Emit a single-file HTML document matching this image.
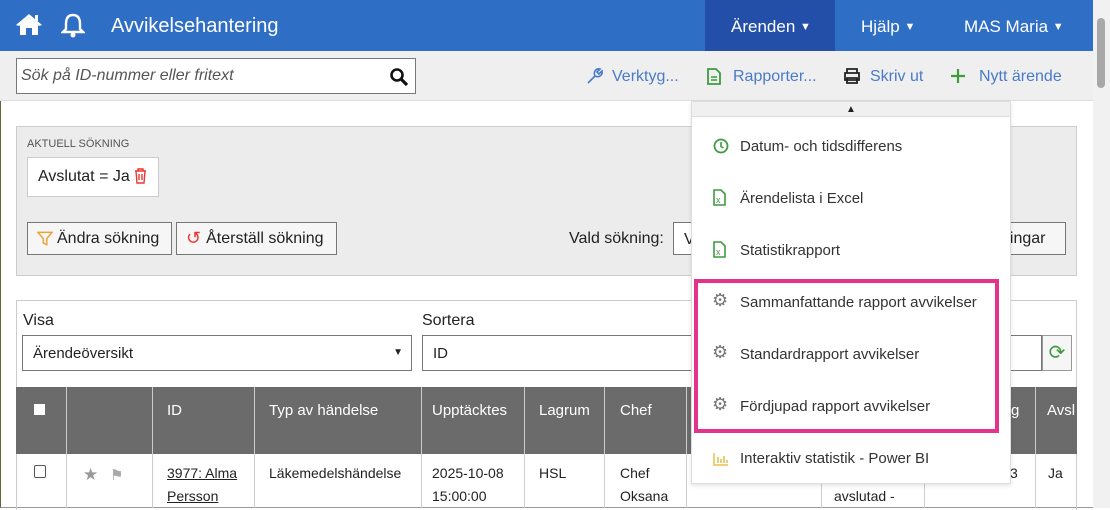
<!DOCTYPE html>
<html><head><meta charset="utf-8"><style>
*{box-sizing:border-box;margin:0;padding:0}
body{width:1110px;height:508px;overflow:hidden;background:#fff;font-family:"Liberation Sans",Arial,sans-serif;position:relative;font-size:15px;color:#222}
.a{position:absolute}
.hdr{left:0;top:0;width:1093px;height:51px;background:#2f6ec5;color:#fff}
.tb{left:0;top:51px;width:1093px;height:50px;background:#efefef;border-bottom:1px solid #ddd}
.btn{background:#f6f6f6;border:1px solid #777;height:33px;font-size:16px;display:flex;align-items:center;padding-left:9px;white-space:nowrap}
.dd{left:691px;top:101px;width:320px;height:383px;background:#fff;border:1px solid #ddd;box-shadow:0 2px 4px rgba(0,0,0,.1)}
.it{position:absolute;left:48px;font-size:15px;color:#333}
.ic{position:absolute;left:21px}
</style></head><body>
<div class="a" style="left:0;top:0;width:1110px;height:508px;border:1px solid #999;border-left:1px solid #5a6a3a"></div>
<div class="a hdr">
 <svg class="a" style="left:15px;top:12px" width="28" height="24" viewBox="0 0 28 24"><path d="M14 2 L1 13 L4 14 L14 5 L24 14 L27 13 Z" fill="#fff"/><path d="M5 13 V23 H11 V16 H17 V23 H23 V13 L14 5Z" fill="#fff"/><rect x="20" y="3" width="3" height="6" fill="#fff"/></svg>
 <svg class="a" style="left:61px;top:12px" width="24" height="26" viewBox="0 0 24 26"><path d="M12 3 C6 3 5 8 5 12 V17 L2 20 H22 L19 17 V12 C19 8 18 3 12 3Z" fill="none" stroke="#fff" stroke-width="2.4"/><circle cx="12" cy="23" r="2.5" fill="#fff"/></svg>
 <div class="a" style="left:111px;top:15px;font-size:20px">Avvikelsehantering</div>
 <div class="a" style="left:705px;top:0;width:130px;height:51px;background:#234fa8"></div>
 <div class="a" style="left:731px;top:17px;font-size:17px">Ärenden <span style="font-size:11px;vertical-align:2px">▼</span></div>
 <div class="a" style="left:861px;top:17px;font-size:17px">Hjälp <span style="font-size:11px;vertical-align:2px">▼</span></div>
 <div class="a" style="left:964px;top:17px;font-size:17px">MAS Maria <span style="font-size:11px;vertical-align:2px">▼</span></div>
</div>
<div class="a" style="left:1093px;top:0;width:17px;height:508px;background:#f1f1f1"></div>
<div class="a" style="left:1097px;top:18px;width:8px;height:70px;background:#a8a8a8;border-radius:4px"></div>
<div class="a tb">
 <div class="a" style="left:16px;top:7px;width:400px;height:36px;background:#fff;border:1px solid #777"></div>
 <div class="a" style="left:21px;top:16px;font-style:italic;color:#555;font-size:16px">Sök på ID-nummer eller fritext</div>
 <svg class="a" style="left:389px;top:16px" width="20" height="20" viewBox="0 0 20 20"><circle cx="8" cy="8" r="5.5" fill="none" stroke="#111" stroke-width="2.6"/><path d="M12 12 L18 18" stroke="#111" stroke-width="3.2"/></svg>
 <svg class="a" style="left:586px;top:16px" width="18" height="18" viewBox="0 0 18 18"><path d="M2 16 L9 9 M9 9 C7 5 10 1 14 2 L11 5 L13 7 L16 4 C17 8 13 11 9 9" fill="none" stroke="#4a7bc8" stroke-width="1.6"/></svg>
 <div class="a" style="left:612px;top:17px;color:#4a7bc8;font-size:16px">Verktyg...</div>
 <svg class="a" style="left:707px;top:17px" width="14" height="17" viewBox="0 0 14 17"><path d="M1 1H9L13 5V16H1Z" fill="none" stroke="#3e9b3e" stroke-width="1.8"/><path d="M4 9H10M4 12H10" stroke="#3e9b3e" stroke-width="1.5"/></svg>
 <div class="a" style="left:733px;top:17px;color:#4a7bc8;font-size:16px">Rapporter...</div>
 <svg class="a" style="left:843px;top:17px" width="18" height="16" viewBox="0 0 18 16"><path d="M4 5V1H14V5M2 5H16V12H2Z M4 10H14V15H4Z" fill="none" stroke="#222" stroke-width="1.8"/></svg>
 <div class="a" style="left:870px;top:17px;color:#4a7bc8;font-size:16px">Skriv ut</div>
 <svg class="a" style="left:951px;top:18px" width="14" height="14" viewBox="0 0 14 14"><path d="M7 0V14M0 7H14" stroke="#3e9b3e" stroke-width="2.2"/></svg>
 <div class="a" style="left:979px;top:17px;color:#4a7bc8;font-size:16px">Nytt ärende</div>
</div>
<div class="a" style="left:16px;top:126px;width:1061px;height:150px;background:#ececec;border:1px solid #ccc"></div>
<div class="a" style="left:27px;top:138px;font-size:11px;color:#555">AKTUELL SÖKNING</div>
<div class="a" style="left:27px;top:157px;width:132px;height:40px;background:#fff;border:1px solid #ccc;font-size:16px;padding:10px 0 0 10px">Avslutat = Ja</div>
<svg class="a" style="left:134px;top:168px" width="13" height="16" viewBox="0 0 13 16"><path d="M1 3H12M4 3V1H9V3M2 3L3 15H10L11 3M5 6V12M8 6V12" fill="none" stroke="#e33" stroke-width="1.4"/></svg>
<div class="a btn" style="left:27px;top:222px;width:145px"><svg width="16" height="17" viewBox="0 0 18 18" style="margin-right:4px;flex:none"><path d="M1 2H17L11 9V16L7 14V9Z" fill="none" stroke="#f0a030" stroke-width="1.6"/></svg>Ändra sökning</div>
<div class="a btn" style="left:176px;top:222px;width:161px"><span style="color:#e33;margin-right:5px;font-size:18px">↺</span>Återställ sökning</div>
<div class="a" style="left:569px;top:230px;font-size:16px">Vald sökning:</div>
<div class="a" style="left:673px;top:222px;width:30px;height:33px;background:#fff;border:1px solid #777;padding:8px 0 0 10px;font-size:16px">V</div>
<div class="a btn" style="left:1000px;top:222px;width:66px;padding-left:0">ningar</div>
<div class="a" style="left:16px;top:300px;width:1061px;height:210px;border:1px solid #ccc;border-bottom:none"></div>
<div class="a" style="left:23px;top:312px;font-size:16px">Visa</div>
<div class="a" style="left:422px;top:312px;font-size:16px">Sortera</div>
<div class="a" style="left:22px;top:335px;width:390px;height:36px;border:1px solid #777;padding:9px 10px;font-size:15px">Ärendeöversikt<span style="position:absolute;right:8px;font-size:10px;top:11px">▼</span></div>
<div class="a" style="left:422px;top:335px;width:620px;height:36px;border:1px solid #777;padding:9px 10px;font-size:15px">ID</div>
<div class="a" style="left:1042px;top:335px;width:30px;height:36px;border:1px solid #999;background:#f6f6f6;color:#3e9b3e;font-size:20px;text-align:center;padding-top:4px">⟳</div>
<div class="a" style="left:16px;top:387px;width:1061px;height:67px;background:#6b6b6b"></div>
<div class="a" style="left:34px;top:404px;width:11px;height:11px;background:#fff"></div>
<div class="a" style="left:34px;top:465px;width:12px;height:13px;border:1px solid #555;border-radius:2px"></div>
<div class="a" style="left:83px;top:465px;color:#999;font-size:17px">★</div>
<div class="a" style="left:110px;top:466px;color:#aaa;font-size:15px">⚑</div>
<div style="color:#fff;font-size:15px">
<div class="a" style="left:167px;top:402px">ID</div>
<div class="a" style="left:269px;top:402px">Typ av händelse</div>
<div class="a" style="left:432px;top:402px">Upptäcktes</div>
<div class="a" style="left:539px;top:402px">Lagrum</div>
<div class="a" style="left:620px;top:402px">Chef</div>
<div class="a" style="left:1011px;top:402px">g</div>
<div class="a" style="left:1047px;top:402px">Avsl</div>
</div>
<div style="font-size:14px;line-height:23px">
<div class="a" style="left:167px;top:462px;text-decoration:underline">3977: Alma<br>Persson</div>
<div class="a" style="left:269px;top:462px">Läkemedelshändelse</div>
<div class="a" style="left:432px;top:462px">2025-10-08<br>15:00:00</div>
<div class="a" style="left:539px;top:462px">HSL</div>
<div class="a" style="left:620px;top:462px">Chef<br>Oksana</div>
<div class="a" style="left:834px;top:485px">avslutad -</div>
<div class="a" style="left:1010px;top:462px">3</div>
<div class="a" style="left:1048px;top:462px">Ja</div>
</div>
<div class="a" style="left:66px;top:387px;width:1px;height:121px;background:#ccc"></div>
<div class="a" style="left:152px;top:387px;width:1px;height:121px;background:#ccc"></div>
<div class="a" style="left:254px;top:387px;width:1px;height:121px;background:#ccc"></div>
<div class="a" style="left:421px;top:387px;width:1px;height:121px;background:#ccc"></div>
<div class="a" style="left:524px;top:387px;width:1px;height:121px;background:#ccc"></div>
<div class="a" style="left:604px;top:387px;width:1px;height:121px;background:#ccc"></div>
<div class="a" style="left:686px;top:387px;width:1px;height:121px;background:#ccc"></div>
<div class="a" style="left:821px;top:454px;width:1px;height:54px;background:#ccc"></div>
<div class="a" style="left:924px;top:454px;width:1px;height:54px;background:#ccc"></div>
<div class="a" style="left:1035px;top:387px;width:1px;height:121px;background:#ccc"></div>
<div class="a dd">
 <div class="a" style="left:0;top:0;width:318px;height:15px;background:#f0f0f0;border-bottom:1px solid #ddd;text-align:center;font-size:10px;line-height:15px">▲</div>
 <svg class="ic" style="top:36px" width="16" height="16" viewBox="0 0 16 16"><circle cx="8" cy="8" r="6.5" fill="none" stroke="#3e9b3e" stroke-width="1.8"/><path d="M8 4V8.5L10.5 10" stroke="#3e9b3e" stroke-width="1.6" fill="none"/></svg>
 <div class="it" style="top:36px">Datum- och tidsdifferens</div>
 <svg class="ic" style="top:87px" width="13" height="17" viewBox="0 0 13 17"><path d="M1 1H8L12 5V16H1Z" fill="none" stroke="#3e9b3e" stroke-width="1.6"/><text x="3" y="14" font-size="9" fill="#3e9b3e" font-family="Liberation Sans">x</text></svg>
 <div class="it" style="top:88px">Ärendelista i Excel</div>
 <svg class="ic" style="top:139px" width="13" height="17" viewBox="0 0 13 17"><path d="M1 1H8L12 5V16H1Z" fill="none" stroke="#3e9b3e" stroke-width="1.6"/><text x="3" y="14" font-size="9" fill="#3e9b3e" font-family="Liberation Sans">x</text></svg>
 <div class="it" style="top:140px">Statistikrapport</div>
 <div class="ic" style="top:188px;color:#777;font-size:18px;left:20px">⚙︎</div>
 <div class="it" style="top:192px">Sammanfattande rapport avvikelser</div>
 <div class="ic" style="top:240px;color:#777;font-size:18px;left:20px">⚙︎</div>
 <div class="it" style="top:244px">Standardrapport avvikelser</div>
 <div class="ic" style="top:292px;color:#777;font-size:18px;left:20px">⚙︎</div>
 <div class="it" style="top:296px">Fördjupad rapport avvikelser</div>
 <svg class="ic" style="top:350px" width="16" height="14" viewBox="0 0 16 14"><path d="M1 1V13H15" stroke="#e8c050" stroke-width="1.5" fill="none"/><path d="M5 5V11M8 7V11M11 4V11M14 8V11" stroke="#e8c050" stroke-width="1.6"/></svg>
 <div class="it" style="top:348px">Interaktiv statistik - Power BI</div>
</div>
<div class="a" style="left:694px;top:279px;width:305px;height:154px;border:4px solid #e3338a"></div>
</body></html>
